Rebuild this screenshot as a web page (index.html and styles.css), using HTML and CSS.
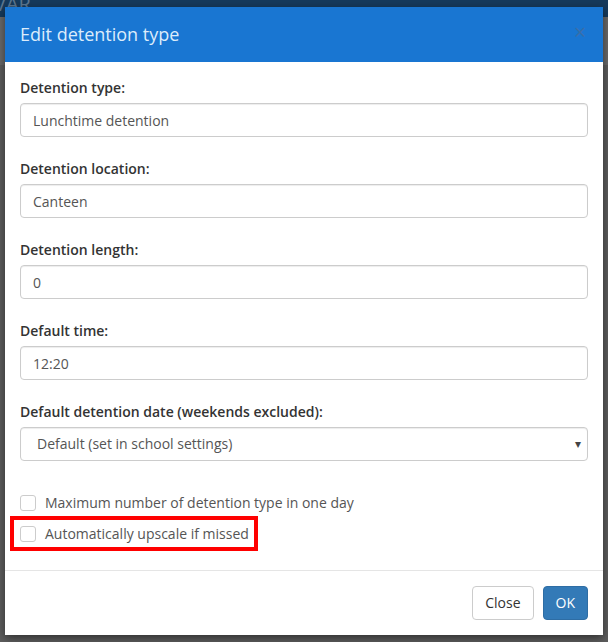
FILE: index.html
```html
<!DOCTYPE html>
<html>
<head>
<meta charset="utf-8">
<link rel="stylesheet" href="styles.css">
</head>
<body>
<div class="backdrop">
  <div class="navbar"><span class="brand">VAR</span></div>
</div>
<div class="modal">
  <div class="modal-header">
    <h4 class="modal-title">Edit detention type</h4>
    <span class="close">&times;</span>
  </div>
  <div class="modal-body">
    <div class="group">
      <label class="field-label">Detention type:</label>
      <input class="control" type="text" value="Lunchtime detention">
    </div>
    <div class="group">
      <label class="field-label">Detention location:</label>
      <input class="control" type="text" value="Canteen">
    </div>
    <div class="group">
      <label class="field-label">Detention length:</label>
      <input class="control" type="text" value="0">
    </div>
    <div class="group">
      <label class="field-label">Default time:</label>
      <input class="control" type="text" value="12:20">
    </div>
    <div class="group last">
      <label class="field-label">Default detention date (weekends excluded):</label>
      <div class="control select"><span>Default (set in school settings)</span><span class="caret">&#9662;</span></div>
    </div>
    <div class="checks">
      <div class="check"><span class="box"></span><span>Maximum number of detention type in one day</span></div>
      <div class="check highlight"><span class="box"></span><span>Automatically upscale if missed</span></div>
    </div>
  </div>
  <div class="modal-footer">
    <button class="btn">Close</button>
    <button class="btn primary">OK</button>
  </div>
</div>
</body>
</html>
```

FILE: styles.css
```css
html, body {
  margin: 0;
  padding: 0;
  height: 100%;
}
body {
  background: #5e5e5e;
  font-family: "Open Sans", "Noto Sans", sans-serif;
  font-size: 14px;
  color: #333;
  overflow: hidden;
}
.backdrop {
  height: 100%;
}
.navbar {
  height: 27px;
  background: #163a5c;
  border-bottom: 48px solid #6a6a6a;
}
.brand {
  display: block;
  margin-top: -10px;
  margin-left: -6px;
  font-size: 20px;
  color: #5d7790;
}
.modal {
  position: absolute;
  left: 5px;
  top: 7px;
  width: 598px;
  background: #fff;
  box-shadow: 0 3px 9px rgba(0, 0, 0, 0.5);
}
.modal-header {
  background: #1976d2;
  height: 55px;
  box-sizing: border-box;
  padding: 15px 15px;
  display: flex;
  align-items: center;
  justify-content: space-between;
}
.modal-title {
  margin: 0;
  font-size: 18px;
  font-weight: 400;
  line-height: 25px;
  color: #dcecfb;
}
.close {
  font-size: 21px;
  line-height: 1;
  color: #3a6ea8;
  margin-right: 2px;
  margin-top: -4px;
  font-weight: 400;
}
.modal-body {
  padding: 16px 15px 19px;
}
.group {
  margin-bottom: 22px;
}
.group.last {
  margin-bottom: 0;
}
.field-label {
  display: block;
  font-weight: 600;
  line-height: 20px;
  margin-bottom: 5px;
  color: #333;
}
.control {
  display: block;
  width: 100%;
  height: 34px;
  box-sizing: border-box;
  padding: 6px 12px;
  font-family: "Open Sans", "Noto Sans", sans-serif;
  font-size: 14px;
  line-height: 20px;
  color: #555;
  border: 1px solid #ccc;
  border-radius: 4px;
  background: #fff;
  box-shadow: inset 0 1px 1px rgba(0, 0, 0, 0.075);
  margin: 0;
}
.select {
  display: flex;
  align-items: center;
  justify-content: space-between;
  padding-left: 16px;
  padding-right: 6px;
}
.caret {
  font-size: 12px;
  color: #444;
}
.checks {
  margin-top: 32px;
  display: flex;
  flex-direction: column;
  align-items: flex-start;
}
.check {
  display: inline-flex;
  align-items: center;
  height: 20px;
  color: #555;
  line-height: 20px;
}
.box {
  width: 16px;
  height: 16px;
  box-sizing: border-box;
  border: 1px solid #ccc;
  border-radius: 3px;
  margin-right: 9px;
  background: #fff;
}
.highlight {
  margin-top: 3px;
  margin-left: -10px;
  height: 27px;
  padding: 0 5px 0 6px;
  border: 4px solid #f00;
}
.modal-footer {
  border-top: 1px solid #e5e5e5;
  padding: 15px;
  display: flex;
  justify-content: flex-end;
  gap: 9px;
}
.btn {
  font-family: "Open Sans", "Noto Sans", sans-serif;
  font-size: 14px;
  line-height: 20px;
  padding: 6px 12px;
  border: 1px solid #ccc;
  border-radius: 4px;
  background: #fff;
  color: #333;
  margin: 0;
}
.btn.primary {
  background: #337ab7;
  border-color: #2e6da4;
  color: #fff;
}
```
